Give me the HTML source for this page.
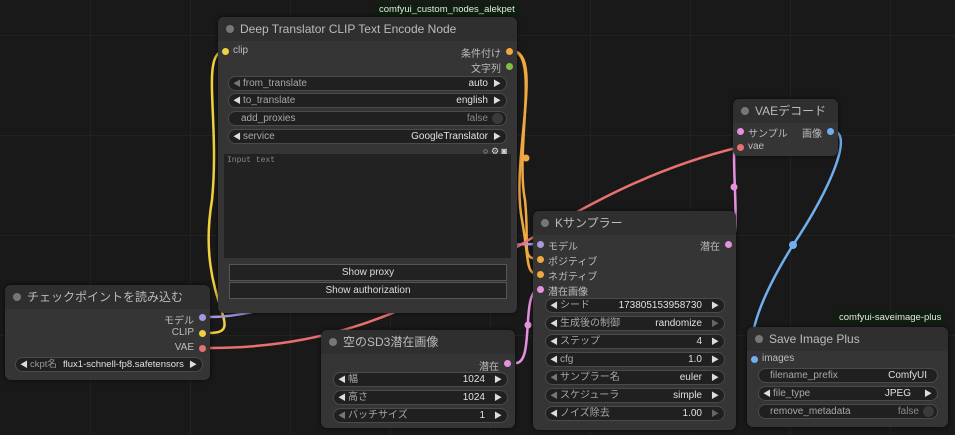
<!DOCTYPE html>
<html><head><meta charset="utf-8"><style>
*{box-sizing:border-box;margin:0;padding:0}
body{width:955px;height:435px;overflow:hidden;background:#191919;font-family:"Liberation Sans","Noto Sans CJK JP",sans-serif;position:relative;
background-image:linear-gradient(#222 1px,transparent 1px),linear-gradient(90deg,#222 1px,transparent 1px);background-size:100px 100px;background-position:-10px 35px}
.node{position:absolute;background:#353535;border-radius:6px;box-shadow:0 0 4px #000a}
.title{height:24px;background:#2f2f2f;border-radius:6px 6px 0 0;color:#bbb;font-size:12px;line-height:25px;padding-left:22px;position:relative}
.title:before{content:"";position:absolute;left:8px;top:8px;width:8px;height:8px;border-radius:50%;background:#777}
.t{position:absolute;font-size:10px;color:#bbb;white-space:nowrap}
.d{position:absolute;width:7px;height:7px;border-radius:50%}
.w{position:absolute;height:15px;background:#202020;border:1px solid #4a4a4a;border-radius:8px;font-size:10px;color:#a8a8a8;line-height:14px;white-space:nowrap}
.w .l{position:absolute;left:14px}
.w .v{position:absolute;right:18px;color:#e0e0e0}
.w .a{position:absolute;left:4px;color:#ddd;font-size:8px}
.w .b{position:absolute;right:5px;color:#ddd;font-size:8px}
.tag{position:absolute;background:#0f1f0f;color:#e6e6e6;font-size:9.5px;padding:1px 4px;border-radius:3px 3px 0 0}
.btn{position:absolute;height:17px;background:#222;border:1px solid #555;color:#ddd;font-size:10px;text-align:center;line-height:15px}
</style></head><body>
<svg width="955" height="435" style="position:absolute;left:0;top:0;z-index:0" fill="none" stroke-width="2.5">
<path d="M209,333 C250,333 195,300 212,200 C220,120 200,51 225,51" stroke="#f0d040"/>
<path d="M512,51 C540,51 515,150 525,200 C530,250 520,259 540,259" stroke="#f0a840"/>
<path d="M512,51 C545,51 510,160 522,220 C530,265 525,274 540,274" stroke="#f0a840"/>
<path d="M209,317 C300,317 380,244 540,244" stroke="#a898e0"/>
<path d="M209,348 C450,348 520,200 740,147" stroke="#e87070"/>
<path d="M516,363 C535,363 520,289 540,289" stroke="#e890e0"/>
<path d="M729,244 C745,244 725,131 740,131" stroke="#e890e0"/>
<path d="M832,131 C855,131 830,190 793,245 C765,290 745,335 754,359" stroke="#70b0f0"/>
<circle cx="793" cy="245" r="4" fill="#70b0f0"/>
<circle cx="526" cy="158" r="3.5" fill="#f0a840"/>
<circle cx="734" cy="187" r="3.5" fill="#e890e0"/>
<circle cx="528" cy="325" r="3.5" fill="#e890e0"/>
</svg>

<div class="tag" style="left:375px;top:3px">comfyui_custom_nodes_alekpet</div>
<div class="node" style="left:218px;top:17px;width:299px;height:296px">
<div class="title">Deep Translator CLIP Text Encode Node</div>
<div class="d" style="left:4px;top:31px;background:#f0d040"></div><div class="t" style="left:15px;top:28px">clip</div>
<div class="t" style="right:16px;top:28px">条件付け</div><div class="d" style="right:4px;top:31px;background:#f0a840"></div>
<div class="t" style="right:16px;top:43px">文字列</div><div class="d" style="right:4px;top:46px;background:#80c040"></div>
<div class="w" style="left:10px;top:59px;width:279px"><span class="a" style="color:#777">◀</span><span class="l">from_translate</span><span class="v">auto</span><span class="b">▶</span></div>
<div class="w" style="left:10px;top:76px;width:279px"><span class="a">◀</span><span class="l">to_translate</span><span class="v">english</span><span class="b">▶</span></div>
<div class="w" style="left:10px;top:94px;width:279px"><span class="l" style="left:12px">add_proxies</span><span class="v" style="color:#888">false</span><span style="position:absolute;right:3px;top:1px;width:11px;height:11px;border-radius:50%;background:#3a3a3a"></span></div>
<div class="w" style="left:10px;top:112px;width:279px"><span class="a">◀</span><span class="l">service</span><span class="v">GoogleTranslator</span><span class="b">▶</span></div>
<div class="t" style="right:10px;top:129px;font-size:9px;color:#ddd">○ ⚙ ◙</div>
<div style="position:absolute;left:6px;top:137px;width:287px;height:104px;background:#222;color:#888;font-family:'Liberation Mono',monospace;font-size:8px;padding:2px 3px">Input text</div>
<div class="btn" style="left:11px;top:247px;width:278px">Show proxy</div>
<div class="btn" style="left:11px;top:265px;width:278px">Show authorization</div>
</div>

<div class="node" style="left:5px;top:285px;width:205px;height:95px">
<div class="title">チェックポイントを読み込む</div>
<div class="t" style="right:16px;top:27px">モデル</div><div class="d" style="right:4px;top:29px;background:#a898e0"></div>
<div class="t" style="right:16px;top:42px">CLIP</div><div class="d" style="right:4px;top:45px;background:#f0d040"></div>
<div class="t" style="right:16px;top:57px">VAE</div><div class="d" style="right:4px;top:60px;background:#e87070"></div>
<div class="w" style="left:10px;top:72px;width:188px;font-size:9.5px"><span class="a">◀</span><span class="l" style="color:#999">ckpt名</span><span class="v" style="left:47px;right:auto">flux1-schnell-fp8.safetensors</span><span class="b">▶</span></div>
</div>

<div class="node" style="left:321px;top:330px;width:194px;height:98px">
<div class="title">空のSD3潜在画像</div>
<div class="t" style="right:16px;top:28px">潜在</div><div class="d" style="right:4px;top:30px;background:#e890e0"></div>
<div class="w" style="left:12px;top:42px;width:175px"><span class="a">◀</span><span class="l">幅</span><span class="v" style="right:22px">1024</span><span class="b">▶</span></div>
<div class="w" style="left:12px;top:60px;width:175px"><span class="a">◀</span><span class="l">高さ</span><span class="v" style="right:22px">1024</span><span class="b">▶</span></div>
<div class="w" style="left:12px;top:78px;width:175px"><span class="a" style="color:#777">◀</span><span class="l">バッチサイズ</span><span class="v" style="right:22px">1</span><span class="b">▶</span></div>
</div>

<div class="node" style="left:533px;top:211px;width:203px;height:219px">
<div class="title">Kサンプラー</div>
<div class="d" style="left:4px;top:30px;background:#a898e0"></div><div class="t" style="left:15px;top:27px">モデル</div>
<div class="d" style="left:4px;top:45px;background:#f0a840"></div><div class="t" style="left:15px;top:42px">ポジティブ</div>
<div class="d" style="left:4px;top:60px;background:#f0a840"></div><div class="t" style="left:15px;top:57px">ネガティブ</div>
<div class="d" style="left:4px;top:75px;background:#e890e0"></div><div class="t" style="left:15px;top:72px">潜在画像</div>
<div class="t" style="right:16px;top:27px">潜在</div><div class="d" style="right:4px;top:30px;background:#e890e0"></div>
<div class="w" style="left:12px;top:87px;width:180px"><span class="a">◀</span><span class="l">シード</span><span class="v" style="right:22px">173805153958730</span><span class="b">▶</span></div>
<div class="w" style="left:12px;top:105px;width:180px"><span class="a">◀</span><span class="l">生成後の制御</span><span class="v" style="right:22px">randomize</span><span class="b" style="color:#666">▶</span></div>
<div class="w" style="left:12px;top:123px;width:180px"><span class="a">◀</span><span class="l">ステップ</span><span class="v" style="right:22px">4</span><span class="b">▶</span></div>
<div class="w" style="left:12px;top:141px;width:180px"><span class="a">◀</span><span class="l">cfg</span><span class="v" style="right:22px">1.0</span><span class="b">▶</span></div>
<div class="w" style="left:12px;top:159px;width:180px"><span class="a" style="color:#777">◀</span><span class="l">サンプラー名</span><span class="v" style="right:22px">euler</span><span class="b">▶</span></div>
<div class="w" style="left:12px;top:177px;width:180px"><span class="a" style="color:#777">◀</span><span class="l">スケジューラ</span><span class="v" style="right:22px">simple</span><span class="b">▶</span></div>
<div class="w" style="left:12px;top:195px;width:180px"><span class="a">◀</span><span class="l">ノイズ除去</span><span class="v" style="right:22px">1.00</span><span class="b" style="color:#666">▶</span></div>
</div>

<div class="node" style="left:733px;top:99px;width:105px;height:57px">
<div class="title">VAEデコード</div>
<div class="d" style="left:4px;top:29px;background:#e890e0"></div><div class="t" style="left:15px;top:26px">サンプル</div>
<div class="d" style="left:4px;top:45px;background:#e87070"></div><div class="t" style="left:15px;top:42px">vae</div>
<div class="t" style="right:16px;top:26px">画像</div><div class="d" style="right:4px;top:29px;background:#70b0f0"></div>
</div>

<div class="tag" style="left:835px;top:311px">comfyui-saveimage-plus</div>
<div class="node" style="left:747px;top:327px;width:201px;height:100px">
<div class="title">Save Image Plus</div>
<div class="d" style="left:4px;top:29px;background:#70b0f0"></div><div class="t" style="left:15px;top:26px">images</div>
<div class="w" style="left:11px;top:41px;width:180px"><span class="l" style="left:11px">filename_prefix</span><span class="v" style="right:10px">ComfyUI</span></div>
<div class="w" style="left:11px;top:59px;width:180px"><span class="a">◀</span><span class="l">file_type</span><span class="v" style="right:26px">JPEG</span><span class="b">▶</span></div>
<div class="w" style="left:11px;top:77px;width:180px"><span class="l" style="left:11px">remove_metadata</span><span class="v" style="color:#888">false</span><span style="position:absolute;right:3px;top:1px;width:11px;height:11px;border-radius:50%;background:#3a3a3a"></span></div>
</div>
</body></html>
